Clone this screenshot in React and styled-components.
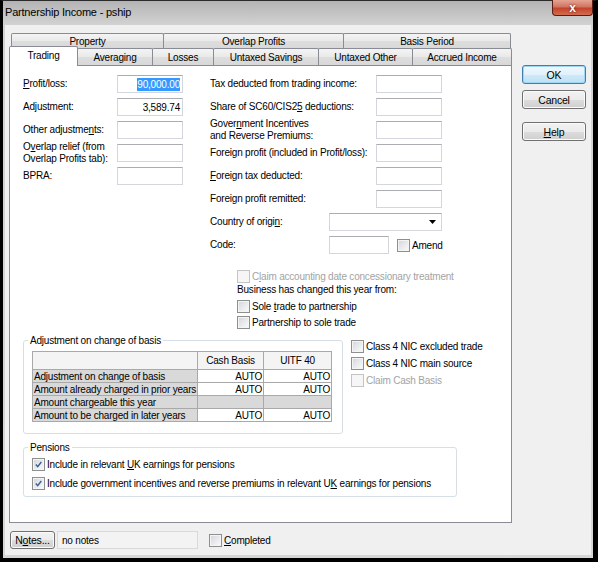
import React from 'react';
import styled, { createGlobalStyle, css } from 'styled-components';

const GlobalStyle = createGlobalStyle`
  html, body {
    margin: 0;
    padding: 0;
    background: #fff;
  }
  body {
    font-family: "Liberation Sans", Arial, sans-serif;
    font-size: 10px;
    letter-spacing: -0.2px;
    color: #000;
  }
`;

const Window = styled.div`
  box-sizing: border-box;
  width: 598px;
  height: 562px;
  display: flex;
  flex-direction: column;
  border-top: 1px solid #2a2a2a;
  border-left: 3px solid #000;
  border-right: 5px solid #000;
  border-bottom: 4px solid #000;
  background: linear-gradient(#b4b4b4, #d2d2d2 24px, #d6d6d6);
`;

const TitleBar = styled.div`
  height: 24px;
  flex-shrink: 0;
  display: flex;
  justify-content: space-between;
  align-items: flex-start;
`;

const Title = styled.div`
  font-size: 11px;
  padding: 5px 0 0 2px;
  color: #000;
`;

const CloseButton = styled.div`
  box-sizing: border-box;
  width: 41px;
  height: 16px;
  margin-top: -1px;
  border: 1px solid #5b1d14;
  border-top: none;
  border-radius: 0 0 4px 4px;
  background: linear-gradient(#e6a392, #d27562 45%, #c2432c 55%, #d56c4f);
  display: flex;
  align-items: center;
  justify-content: center;
  color: #fff;
  font-weight: bold;
  font-size: 12px;
  line-height: 1;
  text-shadow: 0 0 2px #3a0a05;
`;

const Client = styled.div`
  flex: 1;
  margin: 0 2px 3px 2px;
  background: #f0f0f0;
  display: flex;
  padding: 8px 0 0 4px;
`;

const MainColumn = styled.div`
  width: 503px;
  display: flex;
  flex-direction: column;
`;

const TabRow = styled.div`
  display: flex;
  align-items: flex-end;
  height: ${(p) => p.$h}px;
  padding-left: ${(p) => p.$indent}px;
`;

const Tab = styled.div`
  box-sizing: border-box;
  width: ${(p) => p.$w}px;
  height: 100%;
  margin-right: -1px;
  border: 1px solid #898c95;
  border-bottom: none;
  border-radius: 2px 2px 0 0;
  background: linear-gradient(#f4f4f4, #e9e9e9 50%, #dedede 51%, #d8d8d8);
  display: flex;
  justify-content: center;
  align-items: center;
  padding-top: 1px;
  ${(p) =>
    p.$active &&
    css`
      position: relative;
      z-index: 1;
      height: 20px;
      margin-bottom: -1px;
      padding: 0 0 3px;
      background: #fff;
    `}
`;

const Panel = styled.div`
  box-sizing: border-box;
  height: 458px;
  border: 1px solid #898c95;
  background: #fff;
  display: flex;
  flex-direction: column;
`;

const Fields = styled.div`
  display: flex;
  padding: 9px 0 0 13px;
`;

const Column = styled.div`
  width: ${(p) => p.$w}px;
  display: flex;
  flex-direction: column;
`;

const FieldStack = styled.div`
  display: flex;
  flex-direction: column;
  gap: 5px;
`;

const FieldRow = styled.div`
  display: flex;
  align-items: center;
  height: 18px;
`;

const FieldLabel = styled.div`
  width: ${(p) => p.$w}px;
  flex-shrink: 0;
  line-height: 12px;
`;

const Key = styled.span`
  text-decoration: underline;
`;

const TextBox = styled.div`
  box-sizing: border-box;
  width: ${(p) => p.$w}px;
  height: 18px;
  flex-shrink: 0;
  border: 1px solid #d3d6dc;
  border-top-color: #abadb3;
  background: #fff;
  display: flex;
  align-items: center;
  justify-content: flex-end;
  padding: 0 2px;
`;

const Selected = styled.span`
  background: #3399ff;
  color: #fff;
  line-height: 13px;
`;

const ChangeBlock = styled.div`
  margin: 15px 0 0 27px;
  display: flex;
  flex-direction: column;
`;

const CheckRow = styled.div`
  display: flex;
  align-items: center;
  gap: 2px;
  height: ${(p) => p.$h || 17}px;
  margin-top: ${(p) => p.$mt || 0}px;
  margin-left: ${(p) => p.$ml || 0}px;
  color: ${(p) => (p.$disabled ? '#a3a3a3' : '#000')};
`;

const CheckText = styled.span`
  white-space: nowrap;
`;

const TextLine = styled.div`
  height: ${(p) => p.$h}px;
  display: flex;
  align-items: center;
`;

const Box = styled.span`
  box-sizing: border-box;
  width: 13px;
  height: 13px;
  flex-shrink: 0;
  display: inline-flex;
  align-items: center;
  justify-content: center;
  border: 1px solid ${(p) => (p.$disabled ? '#c4c4c4' : '#8e8f8f')};
  background: ${(p) =>
    p.$disabled
      ? '#f6f6f6'
      : 'linear-gradient(135deg, #d2d4d8 0%, #e6e7ea 45%, #fbfbfb 100%)'};
  box-shadow: inset 0 0 0 1px ${(p) => (p.$disabled ? '#f6f6f6' : '#f4f4f4')};
`;

const Check = ({ checked, disabled }) => (
  <Box $disabled={disabled}>
    {checked && (
      <svg width="9" height="9" viewBox="0 0 9 9">
        <path d="M1.8 4.6 L3.7 6.6 L7.3 2" fill="none" stroke="#3a5f96" strokeWidth="1.4" />
      </svg>
    )}
  </Box>
);

const CheckItem = ({ checked, disabled, children, ...rest }) => (
  <CheckRow $disabled={disabled} {...rest}>
    <Check checked={checked} disabled={disabled} />
    <CheckText>{children}</CheckText>
  </CheckRow>
);

const LowerRow = styled.div`
  display: flex;
  padding-left: 13px;
  margin-top: 4px;
`;

const Group = styled.fieldset`
  box-sizing: border-box;
  width: ${(p) => p.$w}px;
  margin: 0;
  padding: ${(p) => p.$pad};
  border: 1px solid #d5dfe5;
  border-radius: 3px;
  box-shadow: inset 1px 1px 0 #fff;
  min-width: 0;
`;

const GroupTitle = styled.legend`
  padding: 0 2px;
  margin-left: -4px;
  line-height: 13px;
`;

const BasisTable = styled.table`
  border-collapse: collapse;
  width: 299px;
  table-layout: fixed;
  border: 1px solid #8f8f8f;
  line-height: 11px;
`;

const HeadCell = styled.th`
  font-weight: normal;
  height: 17px;
  padding: 0 2px;
  text-align: center;
  background: #f4f4f4;
  border: 1px solid #a9a9a9;
`;

const RowLabel = styled.td`
  height: 12px;
  padding: 0 1px;
  background: #d9d9d9;
  border: 1px solid #a9a9a9;
  white-space: nowrap;
  overflow: hidden;
`;

const ValueCell = styled.td`
  height: 12px;
  padding: 0 1px;
  text-align: right;
  background: ${(p) => (p.$blank ? '#d9d9d9' : '#fff')};
  border: 1px solid #a9a9a9;
`;

const SideChecks = styled.div`
  margin-left: 8px;
  padding-top: 4px;
  display: flex;
  flex-direction: column;
`;

const PensionsRow = styled.div`
  padding-left: 13px;
  margin-top: 7px;
`;

const BottomBar = styled.div`
  display: flex;
  align-items: center;
  height: 18px;
  margin-top: 8px;
`;

const Button = styled.div`
  box-sizing: border-box;
  width: ${(p) => p.$w || 64}px;
  height: ${(p) => p.$h || 19}px;
  margin-top: ${(p) => p.$mt || 0}px;
  margin-left: ${(p) => p.$ml || 0}px;
  border: 1px solid #707070;
  border-radius: 3px;
  background: linear-gradient(#f2f2f2 0%, #ebebeb 50%, #dddddd 51%, #cfcfcf 100%);
  box-shadow: inset 0 0 0 1px #fbfbfb;
  display: flex;
  align-items: center;
  justify-content: center;
  font-size: 10.5px;
  ${(p) =>
    p.$default &&
    css`
      border-color: #3c7fb1;
      background: linear-gradient(#f1f8fd 0%, #e1f1fb 50%, #cfe9f8 51%, #bde1f5 100%);
      box-shadow: inset 0 0 0 1px #9fd6f4;
    `}
`;

const NotesField = styled.div`
  box-sizing: border-box;
  width: 141px;
  height: 18px;
  margin-left: 2px;
  padding-left: 4px;
  border: 1px solid #d9d9d9;
  background: #f3f3f3;
  display: flex;
  align-items: center;
`;

const ButtonColumn = styled.div`
  margin-left: 10px;
  padding-top: 32px;
  display: flex;
  flex-direction: column;
`;

const leftFields = [
  { label: <><Key>P</Key>rofit/loss:</>, value: <Selected>90,000.00</Selected> },
  { label: <>Ad<Key>j</Key>ustment:</>, value: '3,589.74' },
  { label: <>Other adjustme<Key>n</Key>ts:</> },
  { label: <>O<Key>v</Key>erlap relief (from<br />Overlap Profits tab):</> },
  { label: 'BPRA:' },
];

const rightFields = [
  <>Tax deducted from tradin<Key>g</Key> income:</>,
  <>Share of SC60/CIS2<Key>5</Key> deductions:</>,
  <>Gover<Key>n</Key>ment Incentives<br />and Reverse Premiums:</>,
  <>Foreign profit (included in Profit/loss):</>,
  <><Key>F</Key>oreign tax deducted:</>,
  <>Foreign profit remitted:</>,
];

const tabsBack = [
  ['Property', 153],
  ['Overlap Profits', 181],
  ['Basis Period', 168],
];

const tabsFront = [
  ['Trading', 69, true],
  ['Averaging', 76],
  ['Losses', 62],
  ['Untaxed Savings', 106],
  ['Untaxed Other', 95],
  ['Accrued Income', 100],
];

const basisRows = [
  ['Adjustment on change of basis', 'AUTO', 'AUTO'],
  ['Amount already charged in prior years', 'AUTO', 'AUTO'],
  ['Amount chargeable this year', null, null],
  ['Amount to be charged in later years', 'AUTO', 'AUTO'],
];

export default function App() {
  return (
    <>
      <GlobalStyle />
      <Window>
        <TitleBar>
          <Title>Partnership Income - pship</Title>
          <CloseButton>x</CloseButton>
        </TitleBar>
        <Client>
          <MainColumn>
            <TabRow $h={15} $indent={2}>
              {tabsBack.map(([name, w]) => (
                <Tab key={name} $w={w}>{name}</Tab>
              ))}
            </TabRow>
            <TabRow $h={17} $indent={0}>
              {tabsFront.map(([name, w, active]) => (
                <Tab key={name} $w={w} $active={active}>{name}</Tab>
              ))}
            </TabRow>
            <Panel>
              <Fields>
                <Column $w={187}>
                  <FieldStack>
                    {leftFields.map((f, i) => (
                      <FieldRow key={i}>
                        <FieldLabel $w={94}>{f.label}</FieldLabel>
                        <TextBox $w={66}>{f.value}</TextBox>
                      </FieldRow>
                    ))}
                  </FieldStack>
                </Column>
                <Column $w={260}>
                  <FieldStack>
                    {rightFields.map((label, i) => (
                      <FieldRow key={i}>
                        <FieldLabel $w={166}>{label}</FieldLabel>
                        <TextBox $w={66} />
                      </FieldRow>
                    ))}
                    <FieldRow>
                      <FieldLabel $w={119}>Country of origi<Key>n</Key>:</FieldLabel>
                      <TextBox $w={113}>
                        <svg width="7" height="4" viewBox="0 0 7 4" style={{ marginRight: 3 }}>
                          <path d="M0 0 H7 L3.5 4 Z" fill="#000" />
                        </svg>
                      </TextBox>
                    </FieldRow>
                    <FieldRow>
                      <FieldLabel $w={119}>Code:</FieldLabel>
                      <TextBox $w={60} />
                      <CheckItem $ml={8}>Amend</CheckItem>
                    </FieldRow>
                  </FieldStack>
                  <ChangeBlock>
                    <CheckItem $h={14} disabled>
                      C<Key>l</Key>aim accounting date concessionary treatment
                    </CheckItem>
                    <TextLine $h={13}>Business has changed this year from:</TextLine>
                    <CheckItem $h={16} $mt={2}>
                      Sole <Key>t</Key>rade to partnership
                    </CheckItem>
                    <CheckItem $h={16}>Partnership to sole trade</CheckItem>
                  </ChangeBlock>
                </Column>
              </Fields>

              <LowerRow>
                <Group $w={320} $pad="4px 0 11px 8px">
                  <GroupTitle>Adjustment on change of basis</GroupTitle>
                  <BasisTable>
                    <colgroup>
                      <col style={{ width: 165 }} />
                      <col style={{ width: 66 }} />
                      <col style={{ width: 68 }} />
                    </colgroup>
                    <thead>
                      <tr>
                        <HeadCell />
                        <HeadCell>Cash Basis</HeadCell>
                        <HeadCell>UITF 40</HeadCell>
                      </tr>
                    </thead>
                    <tbody>
                      {basisRows.map(([label, a, b]) => (
                        <tr key={label}>
                          <RowLabel>{label}</RowLabel>
                          <ValueCell $blank={a === null}>{a}</ValueCell>
                          <ValueCell $blank={b === null}>{b}</ValueCell>
                        </tr>
                      ))}
                    </tbody>
                  </BasisTable>
                </Group>
                <SideChecks>
                  <CheckItem>Class 4 NIC excluded trade</CheckItem>
                  <CheckItem>Class 4 NIC main source</CheckItem>
                  <CheckItem disabled>Claim Cash Basis</CheckItem>
                </SideChecks>
              </LowerRow>

              <PensionsRow>
                <Group $w={434} $pad="1px 0 3px 8px">
                  <GroupTitle>Pensions</GroupTitle>
                  <CheckItem $h={19} checked>
                    Include in relevant <Key>U</Key>K earnings for pensions
                  </CheckItem>
                  <CheckItem $h={19} checked>
                    Include government incentives and reverse premiums in relevant U<Key>K</Key> earnings for pensions
                  </CheckItem>
                </Group>
              </PensionsRow>
            </Panel>

            <BottomBar>
              <Button $w={45} $h={18} $ml={1}>N<Key>o</Key>tes...</Button>
              <NotesField>no notes</NotesField>
              <CheckItem $ml={11}><Key>C</Key>ompleted</CheckItem>
            </BottomBar>
          </MainColumn>

          <ButtonColumn>
            <Button $default>OK</Button>
            <Button $mt={6}>Cancel</Button>
            <Button $mt={13}><span><Key>H</Key>elp</span></Button>
          </ButtonColumn>
        </Client>
      </Window>
    </>
  );
}
